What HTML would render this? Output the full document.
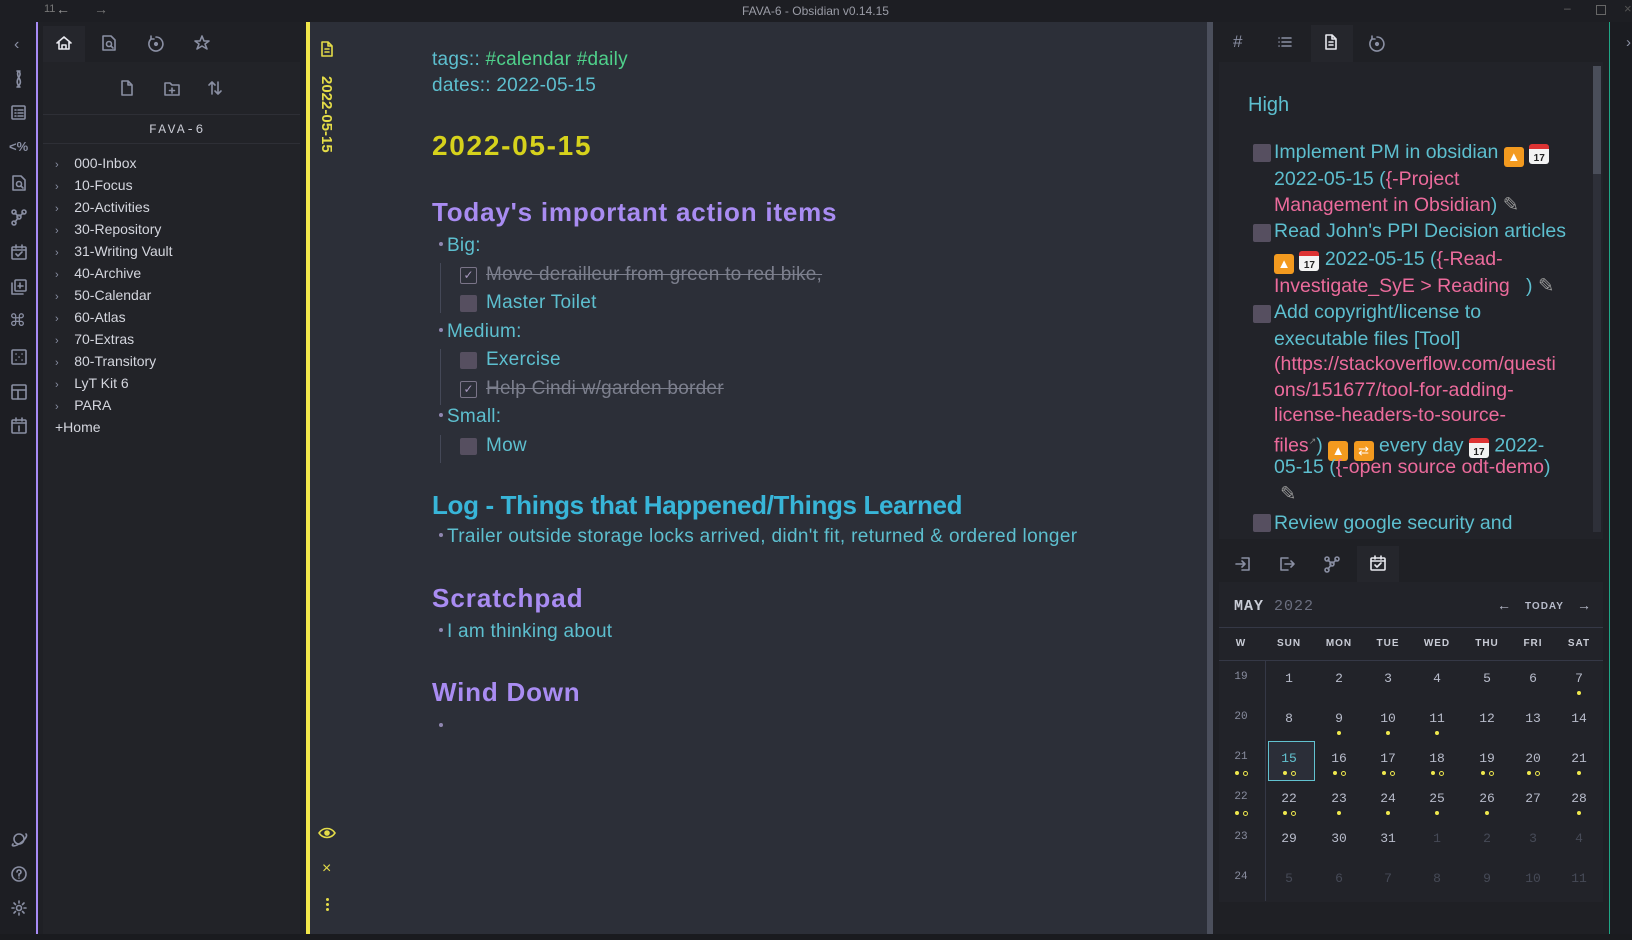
<!DOCTYPE html>
<html><head><meta charset="utf-8">
<style>
*{margin:0;padding:0;box-sizing:border-box}
body{width:1632px;height:940px;background:#1b1c21;font-family:"Liberation Sans",sans-serif;position:relative;overflow:hidden;color:#ccc}
.a{position:absolute;white-space:nowrap}
svg{position:absolute;fill:none;stroke:#8a8fa3;stroke-width:1.6;stroke-linecap:round;stroke-linejoin:round}
.tree{color:#d4d6de;font-size:14px}
.tree div{height:22px;line-height:22px}
.chev{color:#8a8fa3;font-size:11px}
.ed{color:#5dbfcf;font-size:19px;letter-spacing:0.25px}
.cb{position:absolute;width:17px;height:17px;background:#564f60;border-radius:2px}
.cbc{position:absolute;width:17px;height:17px;border:1.5px solid #7a7488;border-radius:2px;color:#a99ac0;font-size:12px;text-align:center;line-height:14px}
.strike{color:#7c7f8d;text-decoration:line-through}
.dot{position:absolute;width:4px;height:4px;border-radius:50%;background:#8f86b0}
.rt{color:#5dbfcf;font-size:19.5px;line-height:24px}
.pk{color:#ec6b9c}
.cal{font-family:"Liberation Mono",monospace;font-size:12px;color:#b8bccb;text-align:center;width:40px}
.hd{font-size:10px;font-weight:bold;letter-spacing:1px;color:#c9ccd6;text-align:center;width:40px}
.yd{position:absolute;width:4px;height:4px;border-radius:50%;background:#efe84d}
.yo{position:absolute;width:5px;height:5px;border-radius:50%;border:1.2px solid #efe84d}
.emo{display:inline-block;width:20px;height:20px;border-radius:3px;vertical-align:-3px;text-align:center;font-size:13px;line-height:20px}
.up{background:#f39a1f;color:#fff}
.calem{background:#f3f3f3;color:#222;font-size:10px;font-weight:bold;border-top:5px solid #d33}
</style></head><body>
<!-- title bar -->
<div class="a" style="left:0;top:0;width:1632px;height:22px;background:#1d1e23"></div>
<div class="a" style="left:44px;top:3px;font-size:11px;color:#777">11</div>
<div class="a" style="left:56px;top:1px;font-size:14px;color:#999">&#8592;</div>
<div class="a" style="left:94px;top:1px;font-size:14px;color:#777">&#8594;</div>
<div class="a" style="left:742px;top:4px;font-size:12px;color:#9a9ca6">FAVA-6 - Obsidian v0.14.15</div>
<div class="a" style="left:1564px;top:1px;font-size:12px;color:#666">&#8211;</div>
<div class="a" style="left:1596px;top:5px;width:10px;height:10px;border:1px solid #666"></div>
<div class="a" style="left:1624px;top:1px;font-size:13px;color:#555">&#215;</div>

<!-- left ribbon -->
<div class="a" style="left:0;top:22px;width:37px;height:912px;background:#1d1e23"></div>
<div class="a" style="left:36px;top:22px;width:2px;height:912px;background:#a78bf5"></div>
<div class="a" style="left:14px;top:36px;font-size:16px;color:#8a8fa3">&#8249;</div>
<svg style="left:10px;top:68px" width="18" height="22" viewBox="0 0 18 22"><path d="M7 3c3 0 4 3 2 6s-3 6 0 9M10 3c-3 0-3 4-1 7s2 6-1 8M7 3h3M7 19h3"/></svg>
<svg style="left:10px;top:104px" width="18" height="18"><rect x="2" y="2" width="13" height="13" rx="1"/><path d="M5 6h1M8 6h5M5 9h1M8 9h5M5 12h1M8 12h5"/></svg>
<div class="a" style="left:9px;top:139px;font-size:13px;color:#8a8fa3;font-weight:bold">&lt;%</div>
<svg style="left:10px;top:174px" width="18" height="18"><path d="M3 2h8l4 4v10H3z"/><circle cx="9" cy="10" r="2.5"/><path d="M11 12l2 2"/></svg>
<svg style="left:10px;top:208px" width="18" height="18"><circle cx="4" cy="4" r="2"/><circle cx="14" cy="4" r="2"/><circle cx="9" cy="9" r="2"/><circle cx="4" cy="15" r="2"/><path d="M5 5l3 3M13 5l-3 3M8 10l-3 4"/></svg>
<svg style="left:10px;top:243px" width="18" height="18"><rect x="2" y="4" width="14" height="12" rx="1"/><path d="M6 2v3M12 2v3M2 7h14M6 11l2 2 4-4"/></svg>
<svg style="left:10px;top:278px" width="18" height="18"><rect x="5" y="2" width="11" height="11" rx="1"/><path d="M2 5v11h11M10 5v5M8 8h5"/></svg>
<div class="a" style="left:9px;top:311px;font-size:17px;color:#8a8fa3">&#8984;</div>
<svg style="left:10px;top:348px" width="18" height="18"><rect x="2" y="2" width="14" height="14" rx="1"/><path d="M6 6h.1M12 6h.1M9 9h.1M6 12h.1M12 12h.1"/></svg>
<svg style="left:10px;top:383px" width="18" height="18"><rect x="2" y="2" width="14" height="14" rx="1"/><path d="M2 7h14M8 7v9"/></svg>
<svg style="left:10px;top:417px" width="18" height="18"><rect x="2" y="3" width="14" height="13" rx="1"/><path d="M6 1v3M12 1v3M2 6h14M9 9v5"/></svg>
<svg style="left:10px;top:830px" width="18" height="18"><circle cx="9" cy="9" r="5"/><path d="M3 14c-2 2 1 3 6 0s9-8 7-10"/></svg>
<svg style="left:10px;top:865px" width="18" height="18"><circle cx="9" cy="9" r="7"/><path d="M7 7a2 2 0 1 1 2 2v2M9 13v.1"/></svg>
<svg style="left:10px;top:899px" width="18" height="18"><circle cx="9" cy="9" r="2.5"/><path d="M9 2v2M9 14v2M2 9h2M14 9h2M4 4l1.5 1.5M12.5 12.5L14 14M4 14l1.5-1.5M12.5 5.5L14 4"/></svg>

<!-- left sidebar -->
<div class="a" style="left:38px;top:22px;width:268px;height:912px;background:#1f2025"></div>
<div class="a" style="left:43px;top:62px;width:257px;height:872px;background:#222328"></div>
<div class="a" style="left:43px;top:26px;width:42px;height:36px;background:#25262c"></div>
<svg style="left:55px;top:34px;stroke:#e8e8ee" width="18" height="18"><path d="M2 9l7-6 7 6M4 7v8h10V7M7 15v-4h4v4"/></svg>
<svg style="left:100px;top:34px" width="18" height="18"><path d="M3 2h8l4 4v10H3z"/><circle cx="9" cy="10" r="2.5"/><path d="M11 12l2 2"/></svg>
<svg style="left:147px;top:34px" width="18" height="18"><path d="M4 5a7 7 0 1 0 5-2"/><path d="M4 2v3h3"/><circle cx="9" cy="10" r="1.3" fill="#8a8fa3"/></svg>
<svg style="left:193px;top:34px" width="18" height="18"><path d="M9 2l2 5h5l-4 3 2 5-5-3-5 3 2-5-4-3h5z"/></svg>
<svg style="left:119px;top:79px" width="16" height="18"><path d="M3 2h6l4 4v10H3zM9 2v4h4"/></svg>
<svg style="left:163px;top:79px" width="18" height="18"><path d="M2 4h5l2 2h7v10H2zM9 9v5M6.5 11.5h5"/></svg>
<svg style="left:207px;top:79px" width="16" height="18"><path d="M5 3v12M2 6l3-3 3 3M11 3v12M8 12l3 3 3-3"/></svg>
<div class="a" style="left:43px;top:114px;width:257px;height:1px;background:#2e2f36"></div>
<div class="a" style="left:149px;top:122px;font-size:13px;letter-spacing:1.5px;color:#c8cad3;font-family:'Liberation Mono',monospace">FAVA-6</div>
<div class="a" style="left:43px;top:143px;width:257px;height:1px;background:#2e2f36"></div>
<div class="a tree" style="left:55px;top:152px">
<div><span class="chev">&#8250;</span>&nbsp;&nbsp;&nbsp;&nbsp;000-Inbox</div>
<div><span class="chev">&#8250;</span>&nbsp;&nbsp;&nbsp;&nbsp;10-Focus</div>
<div><span class="chev">&#8250;</span>&nbsp;&nbsp;&nbsp;&nbsp;20-Activities</div>
<div><span class="chev">&#8250;</span>&nbsp;&nbsp;&nbsp;&nbsp;30-Repository</div>
<div><span class="chev">&#8250;</span>&nbsp;&nbsp;&nbsp;&nbsp;31-Writing Vault</div>
<div><span class="chev">&#8250;</span>&nbsp;&nbsp;&nbsp;&nbsp;40-Archive</div>
<div><span class="chev">&#8250;</span>&nbsp;&nbsp;&nbsp;&nbsp;50-Calendar</div>
<div><span class="chev">&#8250;</span>&nbsp;&nbsp;&nbsp;&nbsp;60-Atlas</div>
<div><span class="chev">&#8250;</span>&nbsp;&nbsp;&nbsp;&nbsp;70-Extras</div>
<div><span class="chev">&#8250;</span>&nbsp;&nbsp;&nbsp;&nbsp;80-Transitory</div>
<div><span class="chev">&#8250;</span>&nbsp;&nbsp;&nbsp;&nbsp;LyT Kit 6</div>
<div><span class="chev">&#8250;</span>&nbsp;&nbsp;&nbsp;&nbsp;PARA</div>
<div>+Home</div>
</div>

<!-- editor -->
<div class="a" style="left:306px;top:22px;width:4px;height:912px;background:#f0e64a"></div>
<div class="a" style="left:310px;top:22px;width:897px;height:912px;background:#2c2f38"></div>
<div class="a" style="left:1207px;top:22px;width:6px;height:912px;background:#4b4f5c"></div>
<svg style="left:319px;top:40px;stroke:#e4dc48" width="16" height="18"><path d="M3 2h6l4 4v10H3zM9 2v4h4M6 9h4M6 12h4"/></svg>
<div class="a" style="left:318px;top:76px;writing-mode:vertical-rl;font-size:15px;font-weight:bold;color:#e4dc48">2022-05-15</div>
<svg style="left:318px;top:826px;stroke:#e4dc48" width="18" height="14"><path d="M1 7c4-6 12-6 16 0-4 6-12 6-16 0z"/><circle cx="9" cy="7" r="2" fill="#e4dc48"/></svg>
<div class="a" style="left:322px;top:860px;font-size:16px;color:#e4dc48">&#215;</div>
<div class="a" style="left:326px;top:898px;width:3px;height:3px;background:#e4dc48;border-radius:50%;box-shadow:0 5px 0 #e4dc48,0 10px 0 #e4dc48"></div>

<div class="a ed" style="left:432px;top:49px">tags:: <span style="color:#4fd18b">#calendar #daily</span></div>
<div class="a ed" style="left:432px;top:75px">dates:: 2022-05-15</div>
<div class="a" style="left:432px;top:130px;font-size:28px;font-weight:bold;color:#d6d21c;letter-spacing:1.7px">2022-05-15</div>
<div class="a" style="left:432px;top:197px;font-size:26px;font-weight:bold;color:#a98cf2;letter-spacing:0.8px">Today's important action items</div>
<div class="dot" style="left:439px;top:242px"></div><div class="a ed" style="left:447px;top:235px">Big:</div>
<div class="a" style="left:440px;top:263px;width:1px;height:50px;background:#444857"></div>
<div class="cbc" style="left:460px;top:267px">&#10003;</div><div class="a ed strike" style="left:486px;top:264px">Move derailleur from green to red bike,</div>
<div class="cb" style="left:460px;top:295px"></div><div class="a ed" style="left:486px;top:292px">Master Toilet</div>
<div class="dot" style="left:439px;top:328px"></div><div class="a ed" style="left:447px;top:321px">Medium:</div>
<div class="a" style="left:440px;top:349px;width:1px;height:56px;background:#444857"></div>
<div class="cb" style="left:460px;top:352px"></div><div class="a ed" style="left:486px;top:349px">Exercise</div>
<div class="cbc" style="left:460px;top:381px">&#10003;</div><div class="a ed strike" style="left:486px;top:378px">Help Cindi w/garden border</div>
<div class="dot" style="left:439px;top:413px"></div><div class="a ed" style="left:447px;top:406px">Small:</div>
<div class="a" style="left:440px;top:435px;width:1px;height:28px;background:#444857"></div>
<div class="cb" style="left:460px;top:438px"></div><div class="a ed" style="left:486px;top:435px">Mow</div>
<div class="a" style="left:432px;top:490px;font-size:26px;font-weight:bold;color:#38b5d8;letter-spacing:-0.35px">Log - Things that Happened/Things Learned</div>
<div class="dot" style="left:439px;top:533px"></div><div class="a ed" style="left:447px;top:526px;letter-spacing:0.35px">Trailer outside storage locks arrived, didn't fit, returned &amp; ordered longer</div>
<div class="a" style="left:432px;top:583px;font-size:26px;font-weight:bold;color:#a98cf2;letter-spacing:1px">Scratchpad</div>
<div class="dot" style="left:439px;top:628px"></div><div class="a ed" style="left:447px;top:621px">I am thinking about</div>
<div class="a" style="left:432px;top:677px;font-size:26px;font-weight:bold;color:#a98cf2;letter-spacing:0.8px">Wind Down</div>
<div class="dot" style="left:439px;top:723px"></div>

<!-- right panel -->
<div class="a" style="left:1213px;top:22px;width:396px;height:912px;background:#1f2025"></div>
<div class="a" style="left:1609px;top:22px;width:1px;height:912px;background:#1fa585"></div>
<div class="a" style="left:1626px;top:34px;font-size:15px;color:#8a8fa3">&#8250;</div>
<div class="a" style="left:1233px;top:32px;font-size:17px;color:#8a8fa3">#</div>
<svg style="left:1277px;top:35px" width="16" height="14"><path d="M2 3h.1M5 3h9M2 7h.1M5 7h9M2 11h.1M5 11h9"/></svg>
<div class="a" style="left:1311px;top:25px;width:42px;height:37px;background:#25262c"></div>
<svg style="left:1323px;top:33px;stroke:#e8e8ee" width="16" height="18"><path d="M3 2h6l4 4v10H3zM9 2v4h4M6 9h4M6 12h4"/></svg>
<svg style="left:1368px;top:34px" width="18" height="18"><path d="M4 5a7 7 0 1 0 5-2"/><path d="M4 2v3h3"/><circle cx="9" cy="10" r="1.3" fill="#8a8fa3"/></svg>
<div class="a" style="left:1219px;top:62px;width:384px;height:477px;background:#222329"></div>
<div class="a" style="left:1593px;top:66px;width:8px;height:466px;background:#2e3039"></div>
<div class="a" style="left:1593px;top:66px;width:8px;height:108px;background:#4a4e5a"></div>
<div class="a" style="left:1248px;top:94px;font-size:20px;color:#5dbfcf">High</div>
<div class="cb" style="left:1253px;top:144px;width:18px;height:18px"></div>
<div class="cb" style="left:1253px;top:224px;width:18px;height:18px"></div>
<div class="cb" style="left:1253px;top:305px;width:18px;height:18px"></div>
<div class="cb" style="left:1253px;top:514px;width:18px;height:18px"></div>
<div class="a rt" style="left:1274px;top:140px">Implement PM in obsidian <span class="emo up">&#9650;</span> <span class="emo calem">17</span></div>
<div class="a rt" style="left:1274px;top:167px">2022-05-15 (<span class="pk">{-Project</span></div>
<div class="a rt pk" style="left:1274px;top:193px">Management in Obsidian<span style="color:#5dbfcf">)</span> <span style="color:#999">&#9998;</span></div>
<div class="a rt" style="left:1274px;top:219px">Read John's PPI Decision articles</div>
<div class="a rt" style="left:1274px;top:247px"><span class="emo up">&#9650;</span> <span class="emo calem">17</span> 2022-05-15 (<span class="pk">{-Read-</span></div>
<div class="a rt pk" style="left:1274px;top:274px">Investigate_SyE &gt; Reading &nbsp; <span style="color:#5dbfcf">)</span> <span style="color:#999">&#9998;</span></div>
<div class="a rt" style="left:1274px;top:300px">Add copyright/license to</div>
<div class="a rt" style="left:1274px;top:327px">executable files [Tool]</div>
<div class="a rt pk" style="left:1274px;top:352px">(https://stackoverflow.com/questi</div>
<div class="a rt pk" style="left:1274px;top:378px">ons/151677/tool-for-adding-</div>
<div class="a rt pk" style="left:1274px;top:403px">license-headers-to-source-</div>
<div class="a rt" style="left:1274px;top:429px"><span class="pk">files</span><sup style="font-size:9px;color:#888">&#8599;</sup>) <span class="emo up">&#9650;</span> <span class="emo up">&#8644;</span> every day <span class="emo calem">17</span> 2022-</div>
<div class="a rt" style="left:1274px;top:455px">05-15 (<span class="pk">{-open source odt-demo</span>)</div>
<div class="a rt" style="left:1280px;top:482px;color:#999">&#9998;</div>
<div class="a rt" style="left:1274px;top:511px">Review google security and</div>

<!-- bottom tabs -->
<svg style="left:1234px;top:555px" width="18" height="18"><path d="M8 3h7v12H8M2 9h9M8 6l3 3-3 3"/></svg>
<svg style="left:1278px;top:555px" width="18" height="18"><path d="M10 3H3v12h7M7 9h9M13 6l3 3-3 3"/></svg>
<svg style="left:1323px;top:555px" width="18" height="18"><circle cx="4" cy="4" r="2"/><circle cx="14" cy="4" r="2"/><circle cx="9" cy="9" r="2"/><circle cx="4" cy="15" r="2"/><path d="M5 5l3 3M13 5l-3 3M8 10l-3 4"/></svg>
<div class="a" style="left:1357px;top:546px;width:42px;height:36px;background:#25262c"></div>
<svg style="left:1369px;top:554px;stroke:#e8e8ee" width="18" height="18"><rect x="2" y="4" width="14" height="12" rx="1"/><path d="M6 2v3M12 2v3M2 7h14M6 11l2 2 4-4"/></svg>
<div class="a" style="left:1219px;top:582px;width:384px;height:320px;background:#222329"></div>
<div class="a" style="left:1234px;top:598px;font-family:'Liberation Mono',monospace;font-size:15px;font-weight:bold;color:#c9ccd6;letter-spacing:1px">MAY <span style="color:#6b6f80;font-weight:normal">2022</span></div>
<div class="a" style="left:1497px;top:597px;font-size:14px;color:#b8bccb">&#8592;</div>
<div class="a" style="left:1525px;top:601px;font-size:10px;letter-spacing:1px;color:#b8bccb;font-weight:bold">TODAY</div>
<div class="a" style="left:1577px;top:597px;font-size:14px;color:#b8bccb">&#8594;</div>
<div class="a" style="left:1219px;top:627px;width:384px;height:1px;background:#353846"></div>
<div class="a" style="left:1219px;top:660px;width:384px;height:1px;background:#353846"></div>
<div class="a" style="left:1265px;top:661px;width:1px;height:240px;background:#353846"></div>
<div class="a" style="left:1268px;top:741px;width:47px;height:40px;background:#2b2e38;border:1.5px solid #62c2d0"></div>
<div id="cal"></div>
<script>
(function(){
var cols=[1241,1289,1339,1388,1437,1487,1533,1579];
var hd=['W','SUN','MON','TUE','WED','THU','FRI','SAT'];
var h='';
hd.forEach(function(t,i){h+='<div class="a hd" style="left:'+(cols[i]-20)+'px;top:638px">'+t+'</div>';});
var rows=[[19,1,2,3,4,5,6,7],[20,8,9,10,11,12,13,14],[21,15,16,17,18,19,20,21],[22,22,23,24,25,26,27,28],[23,29,30,31,1,2,3,4],[24,5,6,7,8,9,10,11]];
var ys=[671,711,751,791,831,871];
var dots={'0,7':'d','1,2':'d','1,3':'d','1,4':'d','2,0':'do','2,1':'do','2,2':'do','2,3':'do','2,4':'do','2,5':'do','2,6':'do','2,7':'d','3,0':'do','3,1':'do','3,2':'d','3,3':'d','3,4':'d','3,5':'d','3,7':'d'};
rows.forEach(function(r,ri){r.forEach(function(n,ci){
 var col='#b8bccb',fs='13px';
 if(ci==0){col='#8a8ea0';fs='11px';}
 if((ri==4&&ci>=4)||ri==5&&ci>0)col='#464a57';
 if(ri==2&&ci==1)col='#62c2d0';
 h+='<div class="a cal" style="left:'+(cols[ci]-20)+'px;top:'+ys[ri]+'px;color:'+col+';font-size:'+fs+'">'+n+'</div>';
 var d=dots[ri+','+ci];
 if(d=='d')h+='<div class="yd" style="left:'+(cols[ci]-2)+'px;top:'+(ys[ri]+20)+'px"></div>';
 if(d=='do'){h+='<div class="yd" style="left:'+(cols[ci]-6)+'px;top:'+(ys[ri]+20)+'px"></div><div class="yo" style="left:'+(cols[ci]+2)+'px;top:'+(ys[ri]+19.5)+'px"></div>';}
});});
document.getElementById('cal').innerHTML=h;
})();
</script>
<div class="a" style="left:0;top:934px;width:1632px;height:6px;background:#1a1b1f"></div>
</body></html>
